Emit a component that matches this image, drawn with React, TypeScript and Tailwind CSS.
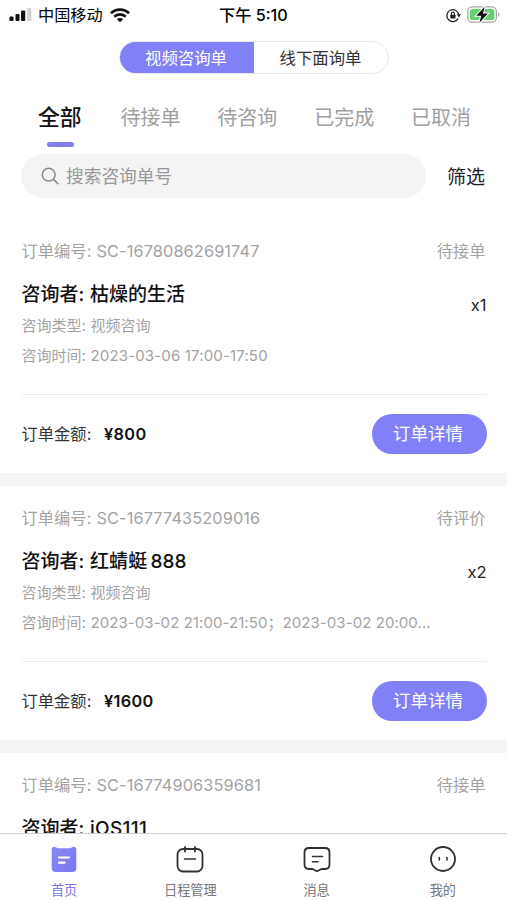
import React from "react";

type Order = {
  id: string;
  status: string;
  name: string;
  nameClass: string;
  time: string;
  timeClass: string;
  count: string;
  amount: string;
};

const orders: Order[] = [
  { id: "SC-16780862691747", status: "待接单", name: "枯燥的生活", nameClass: "", time: "2023-03-06 17:00-17:50", timeClass: "tracking-[0.16px]", count: "x1", amount: "¥800" },
  { id: "SC-16777435209016", status: "待评价", name: "红蜻蜓 888", nameClass: "[word-spacing:-2px] tracking-[0.1px]", time: "2023-03-02 21:00-21:50；2023-03-02 20:00...", timeClass: "tracking-[0.07px]", count: "x2", amount: "¥1600" },
  { id: "SC-16774906359681", status: "待接单", name: "iOS111", nameClass: "tracking-[0.3px]", time: "2023-03-01 17:00-17:50", timeClass: "tracking-[0.16px]", count: "x1", amount: "¥800" },
];

function StatusBar() {
  return (
    <header className="flex h-[30px] items-center pl-[9px] pr-[7px] text-black">
      <svg width="24" height="14" viewBox="0 0 24 14">
        <rect x="0.5" y="8.5" width="4" height="4.5" rx="1" fill="#111" />
        <rect x="6.5" y="6" width="4" height="7" rx="1" fill="#111" />
        <rect x="12" y="2.5" width="4.2" height="10.5" rx="1" fill="#111" />
        <rect x="18.3" y="0" width="4" height="13" rx="1" fill="#d2d2d2" />
      </svg>
      <span className="ml-[5px] w-[66px] whitespace-nowrap text-[16.2px] leading-[30px]">中国移动</span>
      <svg className="ml-[6px]" width="20" height="15" viewBox="0 0 20 15" fill="none" stroke="#111" strokeWidth="2.7">
        <path d="M1 5.2C6 .3 14 .3 19 5.2" />
        <path d="M4.2 8.7C7.5 5.6 12.5 5.6 15.8 8.7" />
        <path d="M10 14.3 6.9 11.3C8.7 9.7 11.3 9.7 13.1 11.3Z" fill="#111" stroke="none" />
      </svg>
      <span className="ml-[89px] whitespace-nowrap text-[16.2px] font-medium leading-[30px]">下午 5:10</span>
      <svg className="ml-auto" width="15" height="15" viewBox="0 0 15 15" fill="none" stroke="#222" strokeWidth="1.3">
        <path d="M12.1 10.6A6 6 0 1 1 12.8 6.5" />
        <path d="M10.7 6.2H15L12.9 9.4Z" fill="#222" stroke="none" />
        <rect x="4.3" y="6.7" width="5.2" height="3.8" rx=".6" fill="#222" stroke="none" />
        <path d="M5.4 7V5.6a1.5 1.5 0 0 1 3 0V7" strokeWidth="1.1" />
      </svg>
      <svg className="ml-[6px]" width="33" height="18" viewBox="0 0 33 18">
        <rect x=".8" y=".8" width="28.6" height="15.4" rx="4.5" fill="#fff" stroke="#a8a8a8" strokeWidth="1.3" />
        <rect x="2.8" y="2.9" width="24.6" height="11.2" rx="2.6" fill="#65cf72" />
        <path d="M31 6.2v4.6c1.8-.6 1.8-4 0-4.6Z" fill="#a8a8a8" />
        <path d="M17.6.8 9.3 9.7h4.9L12.4 16.7l8.5-9.2h-4.9Z" fill="#111" stroke="#fff" strokeWidth="2" paintOrder="stroke" />
      </svg>
    </header>
  );
}

const tabs = ["待接单", "待咨询", "已完成", "已取消"];

function OrderCard({ order }: { order: Order }) {
  return (
    <article className="h-[267px] shrink-0 border-b-[13px] border-[#f5f5f5] pl-[21.5px] pr-[20.5px] pt-[20px]">
      <div className="flex h-6 items-center justify-between text-[16.3px] text-[#a3a3a3]">
        <span className="flex whitespace-nowrap">
          <span className="w-[75px]">订单编号:</span>
          <span className="tracking-[0.13px]">{order.id}</span>
        </span>
        <span className="pr-px">{order.status}</span>
      </div>
      <div className="mt-[16px] flex items-center justify-between">
        <div>
          <div className="flex h-8 items-center whitespace-nowrap text-[19px] font-medium text-[#111]">
            <span className="w-[68.5px]">咨询者:</span>
            <span className={order.nameClass}>{order.name}</span>
          </div>
          <div className="flex h-[30px] items-center whitespace-nowrap text-[15px] text-[#a3a3a3]">
            <span className="w-[69px]">咨询类型:</span>
            <span>视频咨询</span>
          </div>
          <div className="flex h-[30px] items-center whitespace-nowrap text-[15px] text-[#a3a3a3]">
            <span className="w-[69px]">咨询时间:</span>
            <span className={order.timeClass}>{order.time}</span>
          </div>
        </div>
        <span className="mb-[40px] text-[16.5px] text-[#222]">{order.count}</span>
      </div>
      <div className="mt-[23px] flex h-[79px] items-center border-t border-[#ebebeb]">
        <span className="w-[82.5px] pt-px text-[16.3px] text-[#333]">订单金额:</span>
        <span className="pt-px text-[16.3px] font-semibold tracking-[0.35px] text-[#111]">{order.amount}</span>
        <button className="ml-auto h-10 w-[115px] rounded-full bg-[#8280f7] pr-[2px] text-[17.6px] text-white">订单详情</button>
      </div>
    </article>
  );
}

function NavItem({ label, active, children }: { label: string; active?: boolean; children: React.ReactNode }) {
  return (
    <div className="flex flex-1 flex-col items-center pt-[11px]">
      <svg width="30" height="30" viewBox="0 0 30 30" fill="none" stroke="#303030" strokeWidth="1.8" strokeLinecap="round" strokeLinejoin="round">
        {children}
      </svg>
      <span className={active ? "mt-[5px] text-[13.2px] leading-5 text-[#7d77e8]" : "mt-[5px] text-[13.2px] leading-5 text-[#777]"}>{label}</span>
    </div>
  );
}

export default function App() {
  return (
    <div className="flex h-[900px] w-[507px] flex-col overflow-hidden bg-white font-[Inter,'Noto_Sans_CJK_SC',sans-serif]">
      <StatusBar />
      <div className="mx-auto mt-[11px] flex h-[33px] w-[270px] shrink-0 overflow-hidden rounded-full border border-[#e8e8e8] text-[16.4px]">
        <button className="-my-px -ml-px w-[135px] bg-[#8280f7] pt-px text-white">视频咨询单</button>
        <button className="flex-1 pt-px text-[#333]">线下面询单</button>
      </div>
      <nav className="mt-[26px] flex h-[47px] shrink-0 justify-between pl-[38px] pr-[36px] text-[20px] leading-9 text-[#a0a0a0]">
        <div className="-mt-px mr-[2px] flex flex-col items-center">
          <span className="text-[21.8px] font-medium text-[#111]">全部</span>
          <span className="ml-[2px] mt-[7px] h-[4.5px] w-[27px] rounded-full bg-[#8280e8]" />
        </div>
        {tabs.map((t) => (
          <span key={t}>{t}</span>
        ))}
      </nav>
      <div className="mt-[7px] flex h-[44px] shrink-0 items-center pl-[21px] pr-[22px]">
        <div className="flex h-full w-[405px] items-center rounded-full bg-[#f4f4f4] pl-[20px] text-[17.7px] text-[#979797]">
          <svg className="mr-[7px]" width="18" height="18" viewBox="0 0 18 18" fill="none" stroke="#888" strokeWidth="1.5" strokeLinecap="round">
            <circle cx="7.7" cy="7.7" r="6.4" />
            <path d="m12.4 12.4 4.6 4.4" />
          </svg>
          <span className="pt-[2px]">搜索咨询单号</span>
        </div>
        <span className="ml-auto pt-[4px] text-[19px] text-[#222]">筛选</span>
      </div>
      <main className="mt-[21px] flex min-h-0 flex-1 flex-col overflow-hidden">
        {orders.map((o) => (
          <OrderCard key={o.id} order={o} />
        ))}
      </main>
      <footer className="flex h-[67px] shrink-0 border-t border-[#cfcfcf] bg-white px-px">
        <NavItem label="首页" active>
          <defs>
            <linearGradient id="home" x1="0" y1="0" x2="1" y2="1">
              <stop stopColor="#8b88f5" />
              <stop offset="1" stopColor="#7a77f1" />
            </linearGradient>
          </defs>
          <path d="M2.7 4.5Q2.7 1.7 5.2 1.7C7 1.7 7.5 3.3 9.5 3.3H20.5C22.5 3.3 23 1.7 24.8 1.7Q27.3 1.7 27.3 4.5V23Q27.3 27 23.3 27H6.7Q2.7 27 2.7 23Z" fill="url(#home)" stroke="none" />
          <path d="M10 12.5h10M10 17.7h5.5" stroke="#fff" strokeWidth="2.2" />
        </NavItem>
        <NavItem label="日程管理">
          <rect x="2.5" y="4" width="25" height="22.5" rx="5.5" />
          <path d="M10 2v4.5M20 2v4.5" />
          <path d="M9.5 14h11" strokeWidth="1.5" />
        </NavItem>
        <NavItem label="消息">
          <path d="M7 3h16q4.5 0 4.5 4.5v12q0 4.5-4.5 4.5h-3.5l-4.5 2.3-4.5-2.3H7q-4.5 0-4.5-4.5v-12Q2.5 3 7 3Z" />
          <path d="M10.5 11.5h10M10.5 16.8h5.5" strokeWidth="1.5" />
        </NavItem>
        <NavItem label="我的">
          <circle cx="15" cy="14" r="12" />
          <path d="M11.3 12.5v2.5M19 12.5v2.5" strokeWidth="1.6" />
        </NavItem>
      </footer>
    </div>
  );
}
